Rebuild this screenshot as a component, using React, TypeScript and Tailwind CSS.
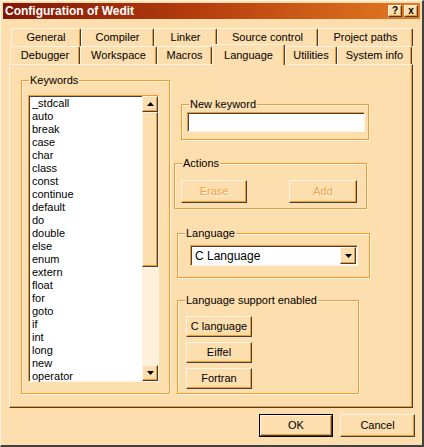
import React from 'react';

// ========================================
// Configuration of Wedit (Win98 peach theme)
// ========================================

const RAISED =
  'border border-t-[#fff4e2] border-l-[#fff4e2] border-r-[#404040] border-b-[#404040] shadow-[inset_-1px_-1px_0_#f59a2c] bg-[#fddeae]';
const SUNKEN =
  'border border-t-[#f59a2c] border-l-[#f59a2c] border-r-[#fff4e2] border-b-[#fff4e2] shadow-[inset_1px_1px_0_#404040]';
const GROUP =
  'relative border border-[#f59a2c] shadow-[1px_1px_0_#fff4e2,inset_1px_1px_0_#fff4e2]';

const KEYWORDS = [
  '_stdcall', 'auto', 'break', 'case', 'char', 'class', 'const', 'continue',
  'default', 'do', 'double', 'else', 'enum', 'extern', 'float', 'for', 'goto',
  'if', 'int', 'long', 'new', 'operator',
];

function Arrow({ up }: { up?: boolean }) {
  return (
    <svg width="7" height="4" viewBox="0 0 7 4">
      <polygon points={up ? '3.5,0 7,4 0,4' : '0,0 7,0 3.5,4'} fill="#000" />
    </svg>
  );
}

function Group({ label, className, children }: { label: string; className: string; children?: React.ReactNode }) {
  return (
    <div className={`${GROUP} ${className}`}>
      <span className="absolute -top-[8px] left-[7px] px-[1px] leading-[14px] bg-[#fddeae]">{label}</span>
      {children}
    </div>
  );
}

function Tab({ label, w, selected }: { label: string; w: string; selected?: boolean }) {
  if (selected) {
    return (
      <div
        className={`${w} relative z-10 -mt-[2px] -mb-[1px] h-[21px] flex items-center justify-center rounded-t-[2px] bg-[#fddeae] border-t border-l border-r border-t-[#fff4e2] border-l-[#fff4e2] border-r-[#404040] shadow-[inset_-1px_0_0_#f59a2c]`}
      >
        {label}
      </div>
    );
  }
  return (
    <div
      className={`${w} h-[18px] flex items-center justify-center rounded-t-[2px] bg-[#fddeae] border-t border-l border-r border-t-[#fff4e2] border-l-[#fff4e2] border-r-[#404040] shadow-[inset_-1px_0_0_#f59a2c]`}
    >
      {label}
    </div>
  );
}

function Button({ label, className, disabled }: { label: string; className: string; disabled?: boolean }) {
  return (
    <div className={`${RAISED} ${className} flex items-center justify-center`}>
      {disabled ? (
        <span className="text-[#f5a040] [text-shadow:1px_1px_0_#fff4e2]">{label}</span>
      ) : (
        label
      )}
    </div>
  );
}

export default function App() {
  return (
    <div className="w-[424px] h-[447px] bg-[#fddeae] font-['Liberation_Sans',Arial,sans-serif] text-[11px] text-black border-r-2 border-b-2 border-r-[#404040] border-b-[#404040] border-l border-t border-l-[#fff4e2] border-t-[#fff4e2] overflow-hidden">
      {/* title bar */}
      <div className="mx-[2px] mt-[2px] h-[16px] flex items-center justify-between bg-gradient-to-r from-[#821606] via-[#b8400e] to-[#e47a22] pl-[2px] pr-[2px]">
        <span className="text-white font-bold text-[12px] leading-none">Configuration of Wedit</span>
        <div className="flex">
          <div className={`${RAISED} w-[14px] h-[12px] flex items-center justify-center font-bold text-[10px] leading-none`}>?</div>
          <div className={`${RAISED} ml-[2px] w-[14px] h-[12px] flex items-center justify-center font-bold text-[10px] leading-none`}>x</div>
        </div>
      </div>

      {/* tabs */}
      <div className="mt-[9px] pl-[10px] flex">
        <Tab label="General" w="w-[70px]" />
        <Tab label="Compiler" w="w-[73px]" />
        <Tab label="Linker" w="w-[63px]" />
        <Tab label="Source control" w="w-[101px]" />
        <Tab label="Project paths" w="w-[95px]" />
      </div>
      <div className="pl-[9px] flex items-end">
        <Tab label="Debugger" w="w-[70px]" />
        <Tab label="Workspace" w="w-[77px]" />
        <Tab label="Macros" w="w-[55px]" />
        <Tab label="Language" w="w-[73px]" selected />
        <Tab label="Utilities" w="w-[52px]" />
        <Tab label="System info" w="w-[75px]" />
      </div>

      {/* panel */}
      <div className="ml-[8px] w-[404px] h-[344px] border border-t-[#fff4e2] border-l-[#fff4e2] border-r-[#404040] border-b-[#404040] shadow-[inset_-1px_-1px_0_#f59a2c] flex pl-[11px] pt-[15px]">
        <Group label="Keywords" className="w-[149px] h-[314px]">
          <div className={`${SUNKEN} ml-[6px] mt-[14px] w-[131px] h-[287px] flex bg-white`}>
            <div className="flex-1 pl-[3px] pt-[1px]">
              {KEYWORDS.map((k) => (
                <div key={k} className="leading-[13px] h-[13px]">{k}</div>
              ))}
            </div>
            <div className="w-[16px] flex flex-col bg-[#fff0dc]">
              <div className={`${RAISED} h-[16px] flex items-center justify-center`}>
                <Arrow up />
              </div>
              <div className={`${RAISED} h-[155px]`} />
              <div className="flex-1" />
              <div className={`${RAISED} h-[16px] flex items-center justify-center`}>
                <Arrow />
              </div>
            </div>
          </div>
        </Group>

        <div className="flex flex-col">
          <Group label="New keyword" className="ml-[11px] mt-[24px] w-[188px] h-[36px]">
            <div className={`${SUNKEN} ml-[5px] mt-[7px] w-[178px] h-[20px] bg-white`} />
          </Group>

          <Group label="Actions" className="ml-[4px] mt-[23px] w-[193px] h-[46px]">
            <div className="ml-[6px] mt-[16px] flex gap-[42px]">
              <Button label="Erase" className="w-[66px] h-[23px]" disabled />
              <Button label="Add" className="w-[68px] h-[23px]" disabled />
            </div>
          </Group>

          <Group label="Language" className="ml-[7px] mt-[24px] w-[193px] h-[45px]">
            <div className={`${SUNKEN} ml-[12px] mt-[11px] w-[168px] h-[21px] bg-white flex items-center`}>
              <span className="flex-1 pl-[4px] text-[12px]">C Language</span>
              <div className={`${RAISED} w-[16px] h-[17px] mr-[1px] flex items-center justify-center`}>
                <Arrow />
              </div>
            </div>
          </Group>

          <Group label="Language support enabled" className="ml-[7px] mt-[22px] w-[182px] h-[94px]">
            <div className="ml-[8px] mt-[15px] flex flex-col gap-[5px]">
              <Button label="C language" className="w-[66px] h-[21px]" />
              <Button label="Eiffel" className="w-[66px] h-[21px]" />
              <Button label="Fortran" className="w-[66px] h-[21px]" />
            </div>
          </Group>
        </div>
      </div>

      {/* dialog buttons */}
      <div className="mt-[6px] flex pl-[258px] gap-[7px]">
        <div className="w-[74px] h-[23px] border border-black flex">
          <Button label="OK" className="flex-1" />
        </div>
        <Button label="Cancel" className="w-[75px] h-[23px]" />
      </div>
    </div>
  );
}
